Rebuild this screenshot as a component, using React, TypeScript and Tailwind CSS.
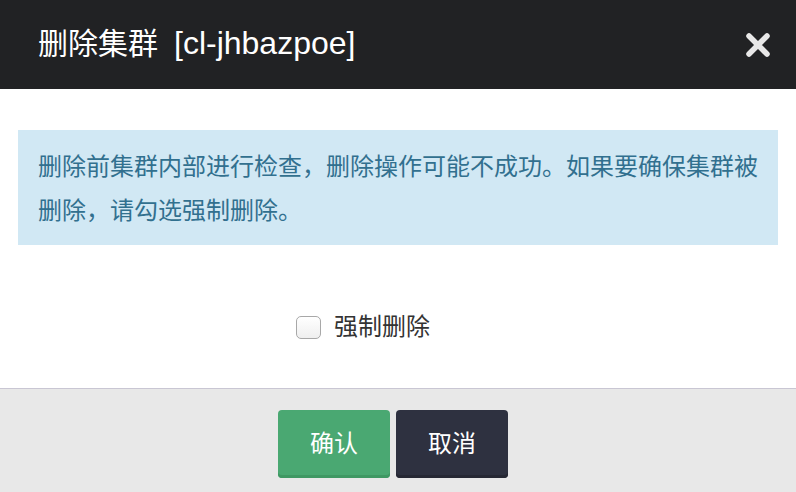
import React from "react";

export default function App() {
  const font = { fontFamily: '"Liberation Sans", "Noto Sans CJK SC", sans-serif' };
  return (
    <div className="w-[796px] h-[492px] bg-white flex flex-col overflow-hidden" style={font}>
      <div className="h-[89px] bg-[#212224] flex items-center justify-between pl-[38px] pr-[25px] pb-[4px] shrink-0">
        <div className="text-white leading-none flex items-baseline">
          <span className="text-[30px]">删除集群</span>
          <span className="text-[32px] ml-[16px]">[cl-jhbazpoe]</span>
        </div>
        <svg width="26" height="26" viewBox="0 0 26 26" className="mt-[4px]">
          <path d="M4 4 L22 22 M22 4 L4 22" stroke="#e8e8e8" strokeWidth="5.5" strokeLinecap="round" />
        </svg>
      </div>
      <div className="h-[299px] flex flex-col px-[18px] pt-[41px] shrink-0">
        <div className="h-[115px] bg-[#d1e8f4] px-[20px] pt-[15px] text-[24px] leading-[44px] text-[#31708f]">
          删除前集群内部进行检查，删除操作可能不成功。如果要确保集群被删除，请勾选强制删除。
        </div>
        <div className="mt-[70px] h-[24px] flex items-center justify-center pr-[70px]">
          <label className="flex items-center gap-[13px] text-[24px] leading-none text-[#333333]">
            <span className="w-[25px] h-[23px] rounded-[5px] border border-[#a8a8a8] bg-gradient-to-b from-white to-[#efefef]" />
            <span>强制删除</span>
          </label>
        </div>
      </div>
      <div className="flex-1 bg-[#e8e8e8] border-t border-[#c9c6d3] flex justify-center gap-[6px] pt-[21px] pr-[10px]">
        <button className="w-[112px] h-[68px] rounded-[4px] bg-[#4aa872] shadow-[inset_0_-3px_0_#3f9863] text-white text-[24px]">
          确认
        </button>
        <button className="w-[112px] h-[68px] rounded-[4px] bg-[#2e3140] shadow-[inset_0_-3px_0_#262834] text-white text-[24px]">
          取消
        </button>
      </div>
    </div>
  );
}
